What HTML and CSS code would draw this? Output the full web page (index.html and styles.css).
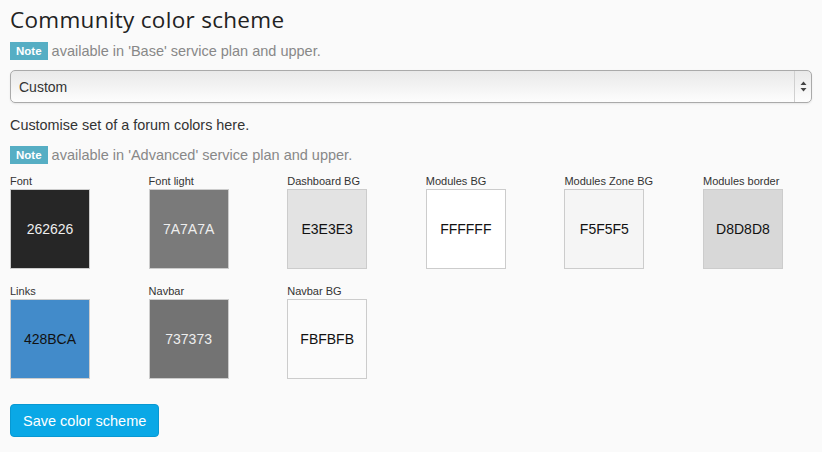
FILE: index.html
```html
<!DOCTYPE html>
<html lang="en">
<head>
  <meta charset="UTF-8">
  <title>Community color scheme</title>
  <link rel="stylesheet" href="styles.css">
</head>
<body>

<div class="page">
  <h1>Community color scheme</h1>
  <p class="note-line"><span class="note">Note</span> available in 'Base' service plan and upper.</p>

  <div class="select">
    <span>Custom</span>
    <div class="arrows">
      <svg width="7" height="11" viewBox="0 0 7 11"><path d="M3.5 0.5 L6.5 4 L0.5 4 Z M0.5 7 L6.5 7 L3.5 10.5 Z" fill="#444"/></svg>
    </div>
  </div>

  <p class="intro">Customise set of a forum colors here.</p>
  <p class="note-line"><span class="note">Note</span> available in 'Advanced' service plan and upper.</p>

  <div class="colors">
    <div class="color"><label>Font</label><div class="swatch light-text" style="background:#262626">262626</div></div>
    <div class="color"><label>Font light</label><div class="swatch light-text" style="background:#7a7a7a">7A7A7A</div></div>
    <div class="color"><label>Dashboard BG</label><div class="swatch" style="background:#e3e3e3">E3E3E3</div></div>
    <div class="color"><label>Modules BG</label><div class="swatch" style="background:#ffffff">FFFFFF</div></div>
    <div class="color"><label>Modules Zone BG</label><div class="swatch" style="background:#f5f5f5">F5F5F5</div></div>
    <div class="color"><label>Modules border</label><div class="swatch" style="background:#d8d8d8">D8D8D8</div></div>
    <div class="color"><label>Links</label><div class="swatch" style="background:#428bca">428BCA</div></div>
    <div class="color"><label>Navbar</label><div class="swatch light-text" style="background:#737373">737373</div></div>
    <div class="color"><label>Navbar BG</label><div class="swatch" style="background:#fbfbfb">FBFBFB</div></div>
  </div>

  <button class="btn-save">Save color scheme</button>
</div>

</body>
</html>
```

FILE: styles.css
```css
body { margin: 0; background: #fafafa; color: #333; font-family: "Liberation Sans", Arial, sans-serif; font-size: 14.4px; }
.page { padding: 6px 10px 10px; }
h1 {
  font-family: "Open Sans", sans-serif;
  font-weight: 500;
  font-size: 22.5px;
  line-height: 28px;
  color: #222;
  margin: 0 0 8px;
  letter-spacing: 0.3px;
}
.note-line { margin: 0; color: #888; font-size: 14.5px; line-height: 18px; }
.note {
  display: inline-block;
  background: #56aec4;
  color: #fff;
  font-weight: bold;
  font-size: 11.5px;
  padding: 0 6px;
  line-height: 18px;
  vertical-align: top;
}
.select {
  margin: 10px 0 13px;
  height: 31px;
  border: 1px solid #aaa;
  border-radius: 5px;
  background: linear-gradient(#e9e9e9, #fdfdfd);
  box-shadow: 0 1px 2px rgba(0,0,0,0.08);
  display: flex;
  align-items: center;
  font-size: 14px;
  color: #333;
}
.select span { flex: 1; padding-left: 8px; }
.arrows {
  width: 16px;
  height: 100%;
  border-left: 1px solid #d0d0d0;
  display: flex;
  align-items: center;
  justify-content: center;
}
.intro { margin: 0 0 12px; line-height: 18px; }
.colors {
  margin-top: 11px;
  display: grid;
  grid-template-columns: repeat(6, 80px);
  column-gap: 58.6px;
  row-gap: 16px;
}
.color label { display: block; white-space: nowrap; font-size: 11px; color: #333; line-height: 13px; margin-bottom: 1px; }
.swatch {
  width: 80px;
  height: 80px;
  box-sizing: border-box;
  border: 1px solid #ccc;
  display: flex;
  align-items: center;
  justify-content: center;
  font-size: 14px;
  color: #111;
}
.swatch.light-text { color: #eee; }
.btn-save {
  display: block;
  margin-top: 25px;
  background: #0aa8e6;
  border: 1px solid #0898d2;
  border-radius: 4px;
  color: #fff;
  font-family: "Liberation Sans", Arial, sans-serif;
  font-size: 14.5px;
  height: 33px;
  padding: 0 12px;
}
```
